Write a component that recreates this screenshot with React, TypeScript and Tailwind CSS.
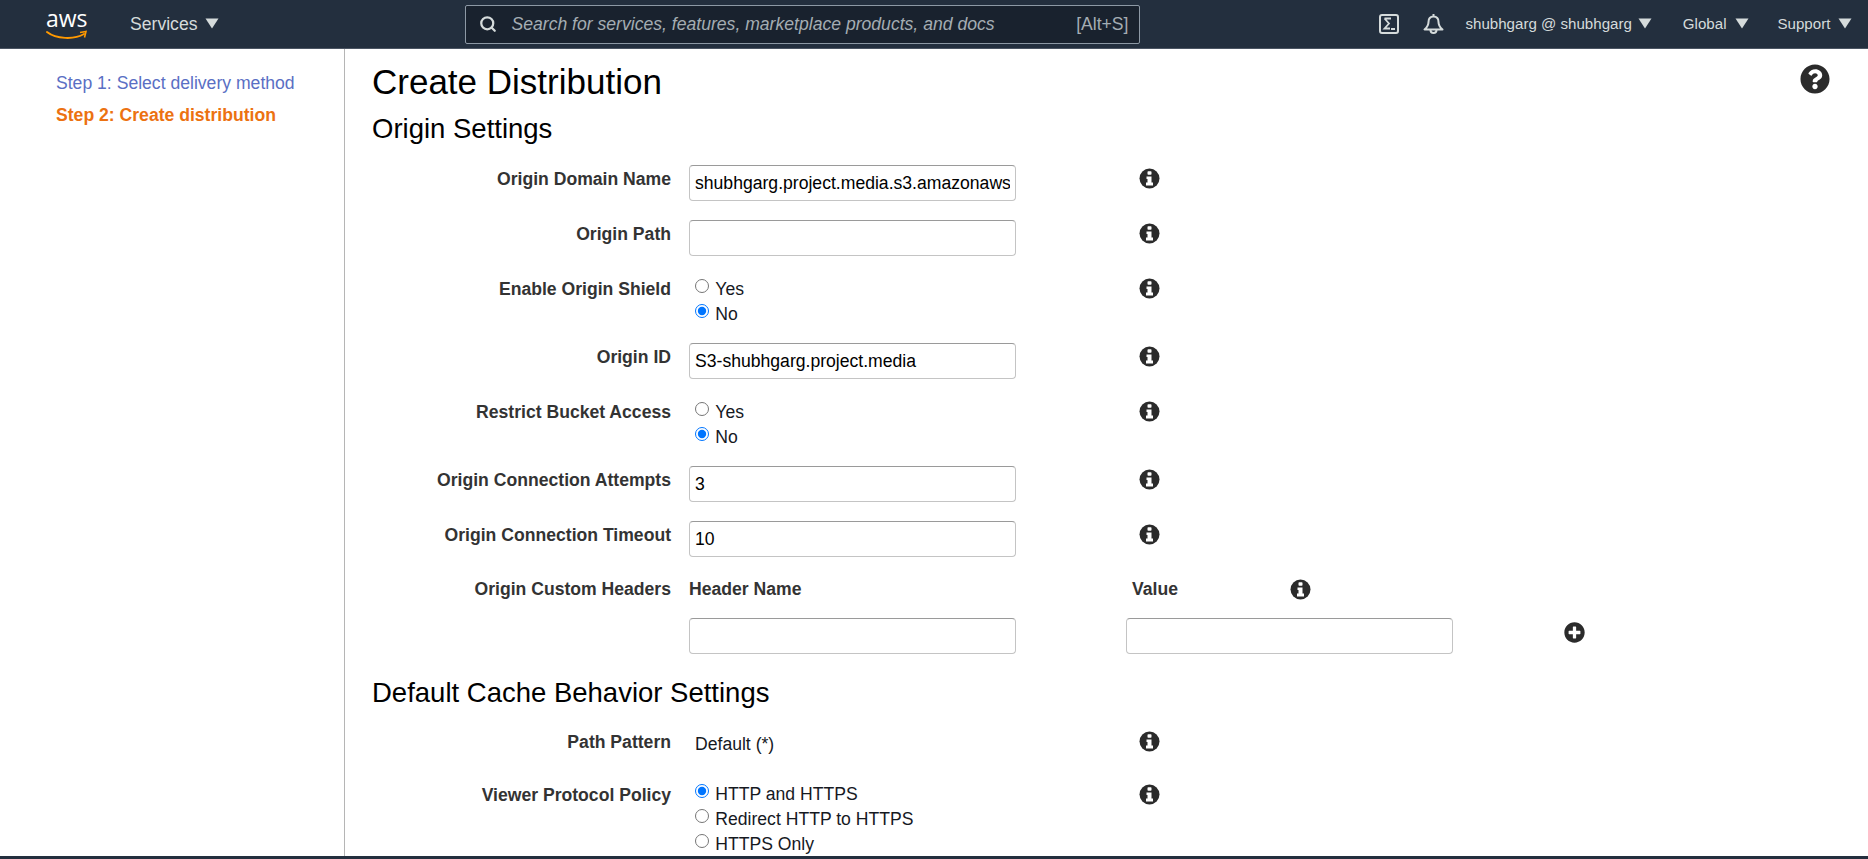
import React from "react";
import { FaQuestionCircle, FaPlusCircle } from "react-icons/fa";
import { Search } from "lucide-react";

const Caret = () => (
  <svg width="14" height="11" viewBox="0 0 14 11" className="shrink-0">
    <path d="M0.5 0.5H13.5L7 10.5Z" fill="#d5dbdb" />
  </svg>
);

const Info = () => (
  <svg width="21" height="21" viewBox="0 0 21 21">
    <circle cx="10.5" cy="10.5" r="10" fill="#2b2b2b" />
    <rect x="8.5" y="3.2" width="4" height="3.6" rx="0.8" fill="#fff" />
    <path d="M7.5 8.5H12.5V14.5H14V17.5H7V14.5H8.5V11H7.5Z" fill="#fff" />
  </svg>
);

const TextBox = ({ value, className = "" }: { value?: string; className?: string }) => (
  <input
    readOnly
    value={value ?? ""}
    className={
      "w-[327px] h-[36px] rounded-[4px] border border-[#c4c4c4] border-t-[#9a9a9a] bg-white px-[5px] text-[17.6px] text-black outline-none " +
      className
    }
  />
);

const Radio = ({ label, checked }: { label: string; checked?: boolean }) => (
  <label className="flex items-center h-[25px] pt-[2px] text-[17.6px] text-[#16191f]">
    <input type="radio" readOnly checked={!!checked} className="w-[14.3px] h-[14.3px] ml-[6px] mr-[6px] mb-[7px] accent-[#0075ff]" />
    {label}
  </label>
);

const Row = ({
  label,
  children,
  height,
}: {
  label: string;
  children: React.ReactNode;
  height: string;
}) => (
  <div className={"grid grid-cols-[299px_327px_141px_21px] gap-x-0 " + height}>
    <div className="text-right font-bold text-[17.6px] leading-[20px] text-[#333333] pt-[4px]">{label}</div>
    <div className="pl-[18px] w-[345px]">{children}</div>
    <div />
    <div className="pt-[3px]">
      <Info />
    </div>
  </div>
);

export default function App() {
  return (
    <div className="h-[859px] w-[1868px] overflow-hidden flex flex-col bg-white font-['Liberation_Sans',Arial,sans-serif]">
      <header className="h-[49px] shrink-0 bg-[#232f3e] border-b border-[#4b5563] flex items-center text-[#d5dbdb]">
        <div className="w-[46px] shrink-0" />
        <div className="relative w-[42px] h-[36px] shrink-0">
          <span className="absolute left-0 top-[-3px] text-[23px] leading-[30px] text-white font-['Open_Sans',sans-serif]">aws</span>
          <svg className="absolute left-0 top-[24px]" width="42" height="12" viewBox="0 0 42 12">
            <path d="M1 2C10 9 28 10 38 4" stroke="#f90" strokeWidth="2" fill="none" strokeLinecap="round" />
            <path d="M34 2.5L40 1.5L38.5 7.5" stroke="#f90" strokeWidth="1.6" fill="none" />
          </svg>
        </div>
        <div className="ml-[42px] flex items-center gap-[8px] text-[17.6px]">
          <span>Services</span>
          <Caret />
        </div>
        <div className="ml-[246px] w-[675px] h-[39px] rounded-[2px] border border-[#8d99a5] bg-[#19222e] flex items-center px-[13px]">
          <Search className="w-[18px] h-[18px] text-[#d5dbdb] shrink-0" strokeWidth={3} />
          <span className="ml-[14px] italic text-[17.6px] text-[#a4adb3] flex-1">
            Search for services, features, marketplace products, and docs
          </span>
          <span className="text-[17.6px] text-[#a4adb3] mr-[-2px]">[Alt+S]</span>
        </div>
        <div className="ml-[239px] w-[20px] h-[20px] rounded-[3px] border-2 border-[#d5dbdb] shrink-0 flex items-center justify-center">
          <svg width="14" height="14" viewBox="0 0 14 14">
            <path d="M2.5 1.5H9M2.5 1.5L7 6.5L2.5 11.5H8M9 12H13" stroke="#d5dbdb" strokeWidth="1.8" fill="none" />
          </svg>
        </div>
        <svg className="ml-[24px] shrink-0" width="21" height="22" viewBox="0 0 21 22" fill="none" stroke="#d5dbdb" strokeWidth="2">
          <path d="M10.5 1V3.5M10.5 3.5C7 3.5 5.5 6 5.5 9C5.5 12.5 4 14.5 1.5 16.5H19.5C17 14.5 15.5 12.5 15.5 9C15.5 6 14 3.5 10.5 3.5Z" strokeLinejoin="round" />
          <path d="M7.5 17C7.5 21 13.5 21 13.5 17" />
        </svg>
        <div className="ml-[21px] flex items-center gap-[6px] text-[15.1px]">
          <span>shubhgarg @ shubhgarg</span>
          <Caret />
        </div>
        <div className="ml-[31px] flex items-center gap-[8px] text-[15.1px]">
          <span>Global</span>
          <Caret />
        </div>
        <div className="ml-[29px] flex items-center gap-[8px] text-[15.1px]">
          <span>Support</span>
          <Caret />
        </div>
      </header>

      <div className="flex-1 min-h-0 flex">
        <aside className="w-[345px] shrink-0 border-r border-[#b5b5b5] pl-[56px] pt-[23px] text-[17.6px]">
          <div className="h-[32px] leading-[22px] text-[#5a6fc4]">Step 1: Select delivery method</div>
          <div className="leading-[22px] font-bold text-[#ec7211]">Step 2: Create distribution</div>
        </aside>

        <main className="relative flex-1 min-w-0 pl-[27px] overflow-hidden">
          <FaQuestionCircle className="absolute right-[38px] top-[15px] w-[30px] h-[30px] text-[#2b2b2b]" />
          <h1 className="text-[35px] leading-[38px] text-black mt-[14px]">Create Distribution</h1>
          <h2 className="text-[27.5px] leading-[32px] text-black mt-[12px] mb-[20px]">Origin Settings</h2>

          <Row label="Origin Domain Name" height="h-[55px]">
            <TextBox value="shubhgarg.project.media.s3.amazonaws.com" />
          </Row>
          <Row label="Origin Path" height="h-[55px]">
            <TextBox />
          </Row>
          <Row label="Enable Origin Shield" height="h-[68px]">
            <div className="mt-[1px]">
              <Radio label="Yes" />
              <Radio label="No" checked />
            </div>
          </Row>
          <Row label="Origin ID" height="h-[55px]">
            <TextBox value="S3-shubhgarg.project.media" />
          </Row>
          <Row label="Restrict Bucket Access" height="h-[68px]">
            <div className="mt-[1px]">
              <Radio label="Yes" />
              <Radio label="No" checked />
            </div>
          </Row>
          <Row label="Origin Connection Attempts" height="h-[55px]">
            <TextBox value="3" />
          </Row>
          <Row label="Origin Connection Timeout" height="h-[55px]">
            <TextBox value="10" />
          </Row>

          <div className="grid grid-cols-[299px_327px_455px_21px] h-[42px]">
            <div className="text-right font-bold text-[17.6px] leading-[20px] text-[#333333] pt-[3px]">Origin Custom Headers</div>
            <div className="pl-[18px] w-[345px] font-bold text-[17.6px] leading-[20px] text-[#333333] pt-[3px]">Header Name</div>
            <div className="pl-[134px] flex items-start pt-[3px]">
              <span className="font-bold text-[17.6px] leading-[20px] text-[#333333] w-[158px]">Value</span>
              <Info />
            </div>
          </div>
          <div className="flex h-[36px] pl-[317px] mb-[23px]">
            <TextBox />
            <TextBox className="ml-[110px]" />
            <FaPlusCircle className="ml-[111px] mt-[4px] w-[21px] h-[21px] text-[#2b2b2b]" />
          </div>

          <h2 className="text-[27.5px] leading-[32px] text-black mb-[19px]">Default Cache Behavior Settings</h2>

          <Row label="Path Pattern" height="h-[53px]">
            <div className="pl-[6px] text-[17.6px] leading-[20px] text-[#16191f] pt-[6px]">Default (*)</div>
          </Row>
          <Row label="Viewer Protocol Policy" height="h-[90px]">
            <Radio label="HTTP and HTTPS" checked />
            <Radio label="Redirect HTTP to HTTPS" />
            <Radio label="HTTPS Only" />
          </Row>
        </main>
      </div>
      <div className="h-[3px] shrink-0 bg-[#232f3e]" />
    </div>
  );
}
